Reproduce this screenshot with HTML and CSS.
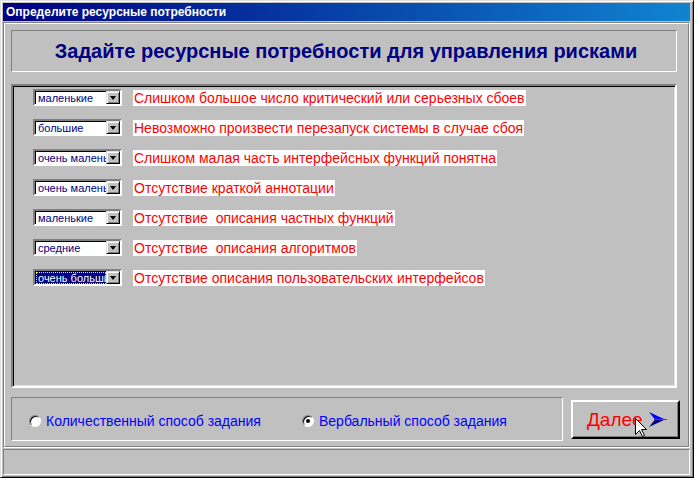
FILE: index.html
```html
<!DOCTYPE html>
<html>
<head>
  <meta charset="UTF-8">
  <title>Определите ресурсные потребности</title>
  <link rel="stylesheet" href="styles.css">
</head>
<body>
  <div class="window">
    <div class="titlebar">Определите ресурсные потребности</div>

    <div class="frame">
      <div class="frame-inner">
        <div class="header">
          <h1>Задайте ресурсные потребности для управления рисками</h1>
        </div>

        <div class="panel">
          <div class="row">
            <div class="combo"><span class="combo-value">маленькие</span><span class="combo-btn"></span></div>
            <span class="risk">Слишком большое число критический или серьезных сбоев</span>
          </div>
          <div class="row">
            <div class="combo"><span class="combo-value">большие</span><span class="combo-btn"></span></div>
            <span class="risk">Невозможно произвести перезапуск системы в случае сбоя</span>
          </div>
          <div class="row">
            <div class="combo"><span class="combo-value">очень маленькие</span><span class="combo-btn"></span></div>
            <span class="risk">Слишком малая часть интерфейсных функций понятна</span>
          </div>
          <div class="row">
            <div class="combo"><span class="combo-value">очень маленькие</span><span class="combo-btn"></span></div>
            <span class="risk">Отсутствие краткой аннотации</span>
          </div>
          <div class="row">
            <div class="combo"><span class="combo-value">маленькие</span><span class="combo-btn"></span></div>
            <span class="risk">Отсутствие&nbsp; описания частных функций</span>
          </div>
          <div class="row">
            <div class="combo"><span class="combo-value">средние</span><span class="combo-btn"></span></div>
            <span class="risk">Отсутствие&nbsp; описания алгоритмов</span>
          </div>
          <div class="row">
            <div class="combo focused"><span class="combo-value">очень большие</span><span class="combo-btn"></span></div>
            <span class="risk">Отсутствие описания пользовательских интерфейсов</span>
          </div>
        </div>

        <div class="bottom">
          <div class="modes">
            <div class="radio"><span class="radio-mark"></span>Количественный способ задания</div>
            <div class="radio checked"><span class="radio-mark"></span>Вербальный способ задания</div>
          </div>

          <div class="next-btn">
            Далее
            <svg class="next-arrow" width="20" height="16" viewBox="0 0 20 16">
              <polygon points="1,0 17,7.5 7,7.5" fill="#0000ff"/>
              <polygon points="7,7.5 17,7.5 1,15" fill="#000080"/>
              <line x1="6" y1="7.5" x2="19" y2="7.5" stroke="#ff0000" stroke-width="1"/>
            </svg>
            <svg class="pointer" width="13" height="20" viewBox="0 0 13 20">
              <polygon points="0.5,0.5 0.5,16.5 4.5,12.5 7.5,18.5 9.5,17.5 6.5,11.5 11.5,11.5" fill="#fff" stroke="#000" stroke-width="1"/>
            </svg>
          </div>
        </div>
      </div>
    </div>

    <div class="statusbar"></div>
  </div>
</body>
</html>
```

FILE: styles.css
```css
body {
  margin: 0;
  font-family: "Liberation Sans", Arial, sans-serif;
  background: #c0c0c0;
}

.window {
  width: 694px;
  height: 478px;
  box-sizing: border-box;
  padding: 2px 3px 2px 2px;
  background: #c0c0c0;
  border: 1px solid;
  border-color: #dfdfdf #000 #000 #dfdfdf;
  box-shadow: inset 1px 1px #fff, inset -1px -1px #808080;
}

.titlebar {
  height: 18px;
  line-height: 18px;
  padding-left: 3px;
  margin-bottom: 1px;
  background: linear-gradient(to right, #000080, #1084d0);
  color: white;
  font-size: 12px;
  font-weight: bold;
}

/* рамка вокруг содержимого */
.frame {
  height: 426px;
  box-sizing: border-box;
  border: 1px solid;
  border-color: #808080 #fff #fff #808080;
  margin-bottom: 1px;
}

.frame-inner {
  height: 100%;
  box-sizing: border-box;
  border: 1px solid;
  border-color: #fff #808080 #808080 #fff;
  padding: 6px 0 0 6px;
}

.header {
  width: 666px;
  height: 42px;
  box-sizing: border-box;
  border: 1px solid;
  border-color: #808080 #fff #fff #808080;
  display: flex;
  align-items: center;
  justify-content: center;
}

.header h1 {
  margin: 0 0 0 4px;
  font-size: 20px;
  font-weight: bold;
  color: #000080;
}

.panel {
  width: 666px;
  height: 304px;
  box-sizing: border-box;
  margin-top: 12px;
  border: 2px solid;
  border-color: #808080 #fff #fff #808080;
  box-shadow: inset 1px 1px #000, inset -1px -1px #dfdfdf;
  padding: 3px 0 0 20px;
}

.row {
  display: flex;
  align-items: flex-start;
  gap: 11px;
  height: 30px;
}

.combo {
  width: 89px;
  height: 17px;
  box-sizing: border-box;
  display: flex;
  background: white;
  border: 2px solid;
  border-color: #808080 #fff #fff #808080;
  box-shadow: inset 1px 1px #000;
}

.combo-value {
  flex: 1;
  overflow: hidden;
  white-space: nowrap;
  padding-left: 2px;
  margin: 1px 0 0 1px;
  line-height: 12px;
  font-size: 11px;
  color: #000080;
}

.combo.focused .combo-value {
  background: #000080;
  color: white;
  outline: 1px dotted #ffff00;
  outline-offset: -1px;
}

.combo-btn {
  width: 14px;
  height: 13px;
  box-sizing: border-box;
  background: #c0c0c0;
  border: 1px solid;
  border-color: #dfdfdf #000 #000 #dfdfdf;
  box-shadow: inset 1px 1px #fff, inset -1px -1px #808080;
  display: flex;
  align-items: center;
  justify-content: center;
}

.combo-btn::after {
  content: "";
  border-top: 4px solid #000;
  border-left: 3.5px solid transparent;
  border-right: 3.5px solid transparent;
}

.risk {
  margin-top: 1px;
  padding: 0 1px;
  height: 16px;
  line-height: 16px;
  background: white;
  color: #ff0000;
  font-size: 14px;
  white-space: pre;
}

.bottom {
  display: flex;
  align-items: flex-start;
  margin-top: 9px;
}

.modes {
  width: 552px;
  height: 44px;
  box-sizing: border-box;
  border: 1px solid;
  border-color: #808080 #fff #fff #808080;
  display: flex;
  align-items: center;
  padding: 4px 0 0 17px;
}

.radio {
  flex: none;
  display: flex;
  align-items: center;
  gap: 5px;
  font-size: 14px;
  color: #0000ff;
}

.radio:first-child {
  width: 273px;
}

.radio-mark {
  width: 12px;
  height: 12px;
  box-sizing: border-box;
  border-radius: 50%;
  background: white;
  border: 1px solid;
  border-color: #808080 #fff #fff #808080;
  box-shadow: inset 1px 1px #000;
  display: flex;
  align-items: center;
  justify-content: center;
}

.radio.checked .radio-mark::after {
  content: "";
  width: 4px;
  height: 4px;
  border-radius: 50%;
  background: #000;
}

.next-btn {
  position: relative;
  width: 109px;
  height: 39px;
  box-sizing: border-box;
  margin: 3px 0 0 8px;
  padding-left: 14px;
  background: #c0c0c0;
  border: 2px solid;
  border-color: #fff #000 #000 #fff;
  box-shadow: inset -1px -1px #808080;
  display: flex;
  align-items: center;
  font-size: 19px;
  color: #ff0000;
}

.next-arrow {
  margin-left: 5px;
}

.pointer {
  position: absolute;
  left: 62px;
  top: 16px;
}

.statusbar {
  height: 26px;
  box-sizing: border-box;
  border: 1px solid;
  border-color: #808080 #fff #fff #808080;
}
```
